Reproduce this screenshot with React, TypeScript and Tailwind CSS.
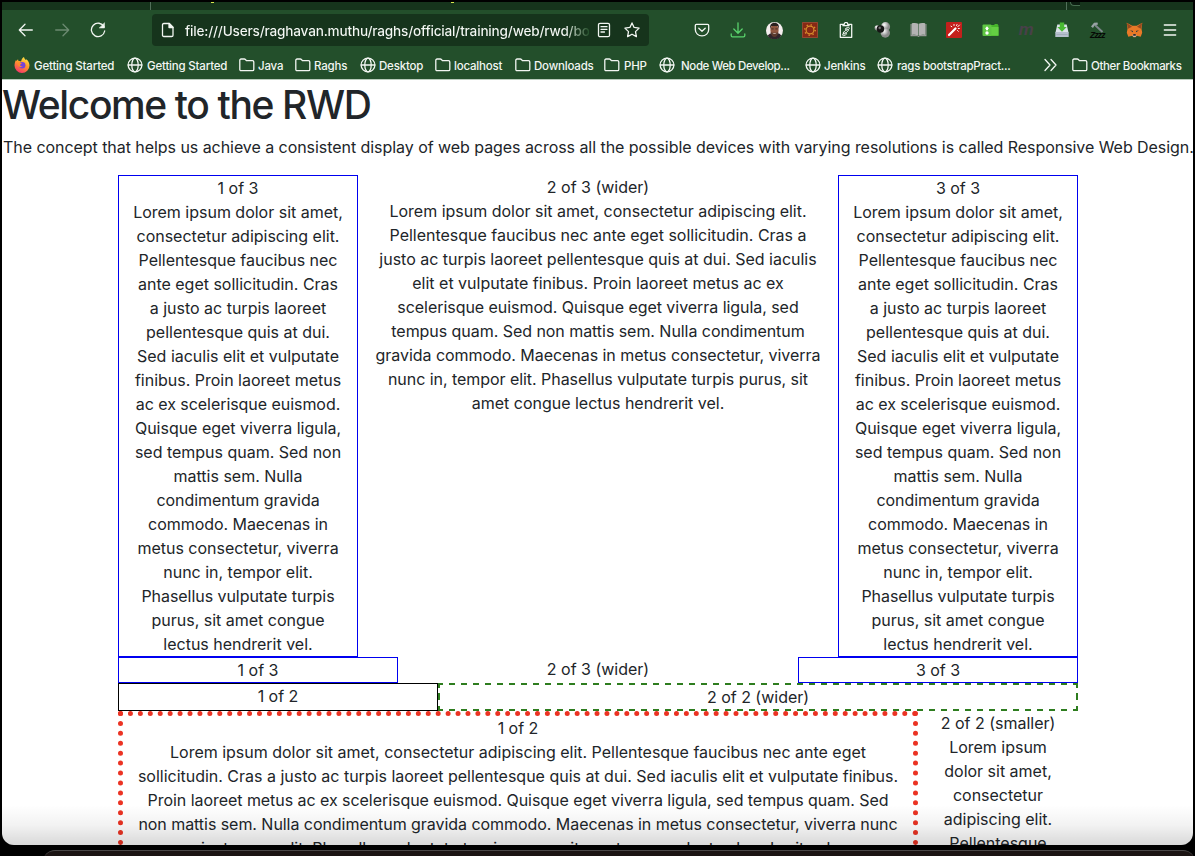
import type { ReactNode } from "react";
import clsx from "clsx";

const narrow = [
  "Lorem ipsum dolor sit amet,", "consectetur adipiscing elit.", "Pellentesque faucibus nec",
  "ante eget sollicitudin. Cras", "a justo ac turpis laoreet", "pellentesque quis at dui.",
  "Sed iaculis elit et vulputate", "finibus. Proin laoreet metus", "ac ex scelerisque euismod.",
  "Quisque eget viverra ligula,", "sed tempus quam. Sed non", "mattis sem. Nulla",
  "condimentum gravida", "commodo. Maecenas in", "metus consectetur, viverra",
  "nunc in, tempor elit.", "Phasellus vulputate turpis", "purus, sit amet congue", "lectus hendrerit vel.",
];
const medium = [
  "Lorem ipsum dolor sit amet, consectetur adipiscing elit.",
  "Pellentesque faucibus nec ante eget sollicitudin. Cras a",
  "justo ac turpis laoreet pellentesque quis at dui. Sed iaculis",
  "elit et vulputate finibus. Proin laoreet metus ac ex",
  "scelerisque euismod. Quisque eget viverra ligula, sed",
  "tempus quam. Sed non mattis sem. Nulla condimentum",
  "gravida commodo. Maecenas in metus consectetur, viverra",
  "nunc in, tempor elit. Phasellus vulputate turpis purus, sit",
  "amet congue lectus hendrerit vel.",
];
const wide = [
  "Lorem ipsum dolor sit amet, consectetur adipiscing elit. Pellentesque faucibus nec ante eget",
  "sollicitudin. Cras a justo ac turpis laoreet pellentesque quis at dui. Sed iaculis elit et vulputate finibus.",
  "Proin laoreet metus ac ex scelerisque euismod. Quisque eget viverra ligula, sed tempus quam. Sed",
  "non mattis sem. Nulla condimentum gravida commodo. Maecenas in metus consectetur, viverra nunc",
  "in, tempor elit. Phasellus vulputate turpis purus, sit amet congue lectus hendrerit vel.",
];
const slim = ["Lorem ipsum", "dolor sit amet,", "consectetur", "adipiscing elit.", "Pellentesque"];

function Lines({ title, lines = [] }: { title: string; lines?: string[] }) {
  return (
    <>
      {[title, ...lines].map((line) => (
        <div
          key={line}
          className={clsx(
            "flex h-6 justify-center whitespace-nowrap",
            /commodo|condimentum|scelerisque|Phasellus/.test(line) ? "tracking-[-0.05px]" : "tracking-[-0.01px]",
          )}
        >
          {line}
        </div>
      ))}
    </>
  );
}

const stroke = { fill: "none", stroke: "currentColor", strokeWidth: 1.3, strokeLinecap: "round", strokeLinejoin: "round" } as const;

function Icon({ children, size = 16 }: { children: ReactNode; size?: number }) {
  return <svg width={size} height={size} viewBox="0 0 16 16" className="shrink-0" {...stroke}>{children}</svg>;
}

const Globe = () => (
  <Icon>
    <circle cx="8" cy="8" r="6.9" />
    <ellipse cx="8" cy="8" rx="3.2" ry="6.9" />
    <path d="M1.2 8h13.6" />
  </Icon>
);
const Folder = () => (
  <Icon>
    <path d="M.8 12.4V3.3c0-.8.5-1.3 1.3-1.3h3.2c.5 0 .8.2 1.1.5l1 1.2h6.1c.8 0 1.3.5 1.3 1.3v7.4c0 .8-.5 1.3-1.3 1.3H2.1c-.8 0-1.3-.5-1.3-1.3z" />
  </Icon>
);
const Firefox = () => (
  <svg width="16" height="16" viewBox="0 0 16 16" className="shrink-0">
    <defs>
      <linearGradient id="flame" x1=".8" y1="0" x2=".3" y2="1">
        <stop offset="0" stopColor="#fff14a" /><stop offset=".45" stopColor="#ff9a2a" /><stop offset="1" stopColor="#f5316d" />
      </linearGradient>
    </defs>
    <path d="M10 0c.2 1.5 1 2.2 2 3.100l.5-.8C14.200 3.900 15.500 6 15.500 8.500A7.500 7.500 0 0 1 .5 8.500c0-2.200.8-4.300 1.500-5.500l.5 1.100L4 2.200l.5 1.800c1.400-.3 2 .2 2.600.4C7.500 2.400 8.300.9 10 0z" fill="url(#flame)" />
    <circle cx="8.200" cy="8.200" r="3.200" fill="#7543d9" />
    <path d="M3.500 6.200c2-.8 3.100-.3 4.600.4-1 .3-1.900.8-1.900 1.600 0 1.100 1.600 1.300 2.400.8-.7 2-4.600 1.600-5.100-2.800z" fill="#ff8a2a" />
  </svg>
);

const bookmarks = [
  { label: "Getting Started", icon: <Firefox />, box: "w-[113px] gap-1" },
  { label: "Getting Started", icon: <Globe />, box: "w-28 gap-1" },
  { label: "Java", icon: <Folder />, box: "w-14 gap-[3px]" },
  { label: "Raghs", icon: <Folder />, box: "w-[65px] gap-[3px]" },
  { label: "Desktop", icon: <Globe />, box: "w-[75px] gap-[3px]" },
  { label: "localhost", icon: <Folder />, box: "w-20 gap-[3px]" },
  { label: "Downloads", icon: <Folder />, box: "w-[89px] gap-[3px]" },
  { label: "PHP", icon: <Folder />, box: "w-[55px] gap-1" },
  { label: "Node Web Develop...", icon: <Globe />, box: "w-[146px] gap-[6px] tracking-[-0.38px]" },
  { label: "Jenkins", icon: <Globe />, box: "w-[72px] gap-[3px]" },
  { label: "rags bootstrapPract...", icon: <Globe />, box: "w-[166px] gap-1 tracking-[-0.28px]" },
];

const extensions = [
  <Icon key="pocket"><path d="M2.300 2.400h11.400c.6 0 1 .4 1 1v4.200c0 3.700-3 6.300-6.700 6.300S1.300 11.300 1.300 7.600V3.400c0-.6.4-1 1-1zM4.800 6.300 8 9.300l3.200-3" /></Icon>,
  <span key="down" className="text-[#59d36c]"><Icon><path d="M8 .8v10M3.800 7 8 11.200 12.200 7M1.200 12v1.500c0 .9.500 1.300 1.300 1.300h11c.8 0 1.300-.4 1.300-1.300V12" /></Icon></span>,
  <svg key="face" width="17" height="17" viewBox="0 0 16 16">
    <circle cx="8" cy="8" r="8" fill="#f5eeee" />
    <path d="M1.500 13c1-1.700 3-2.500 4.500-2.700h4c2 .2 3.600 1 4.500 2.700A8 8 0 0 1 1.500 13z" fill="#30252c" />
    <ellipse cx="8" cy="7.500" rx="3.900" ry="5.500" fill="#8f5740" />
    <path d="M3.900 6.500C3.400 2.800 5 .8 8 .8s4.700 2 4.100 5.700L11.200 3.800H4.900z" fill="#2a211f" />
    <path d="M4.300 9.500c.3 2.800 1.700 4.700 3.700 4.700s3.300-1.900 3.600-4.700l-1.500.7H5.900z" fill="#5a3a2e" />
    <path d="M6.200 10.300h3.600c-.5 1-3.100 1-3.600 0z" fill="#d9c6bf" /><path d="M5 6.500h2.200M8.800 6.500H11" stroke="#3b2520" strokeWidth=".8" />
  </svg>,
  <svg key="gear" width="16" height="16" viewBox="0 0 16 16">
    <path d="M0 0h16v16H0z" fill="#872915" /><path d="M.5.500h15v15H.5z" fill="none" stroke="#914932" />
    <circle cx="8" cy="8" r="3.900" fill="none" stroke="#d88e2b" strokeWidth="1.200" />
    <circle cx="8" cy="8" r="5.200" fill="none" stroke="#d88e2b" strokeWidth="1.500" strokeDasharray="1.300 2.784" />
  </svg>,
  <Icon key="clip"><path d="M5 2.300H2.300v13h11.400v-13H11M5 3.700V2.300h1.300C6.300-.2 9.700-.2 9.700 2.300H11v1.400z" /><g strokeWidth=".8"><rect x="7.300" y="5.800" width="4.200" height="2" rx="1" transform="rotate(-25 9.400 6.800)" /><rect x="4.500" y="8.500" width="6.500" height="2" rx="1" transform="rotate(-40 8 9.500)" /><rect x="4.500" y="11.300" width="4.200" height="2" rx="1" transform="rotate(-25 6.500 12.300)" /></g></Icon>,
  <svg key="balls" width="17" height="16" viewBox="0 0 17 16">
    <defs>
      <radialGradient id="white" cx=".35" cy=".3"><stop stopColor="#fff" /><stop offset="1" stopColor="#8c8c8c" /></radialGradient>
      <radialGradient id="black" cx=".4" cy=".35"><stop stopColor="#999" /><stop offset=".5" stopColor="#161616" /></radialGradient>
    </defs>
    <circle cx="11.500" cy="4.700" r="4.600" fill="url(#white)" /><circle cx="11.300" cy="11" r="4.700" fill="url(#white)" />
    <circle cx="3.200" cy="5.800" r="2.600" fill="url(#white)" /><circle cx="6.500" cy="7" r="3.700" fill="url(#black)" />
  </svg>,
  <svg key="book" width="17" height="16" viewBox="0 0 17 16">
    <path d="M.5 2h1.200v11h5.600l1.200 1 1.200-1h5.600V2h1.200v12.300H9.700l-1.200.7-1.200-.7H.5z" fill="#999" />
    <path d="M1.800 1.300c2.500-.6 5-.4 6.500.4V13.500c-2-1-4.500-1-6.500-.5zM8.800 1.700c1.400-.8 3.900-1 6.400-.4V13c-2-.5-4.400-.5-6.400.5z" fill="#b3b3b3" />
  </svg>,
  <svg key="wand" width="16" height="16" viewBox="0 0 16 16">
    <rect width="16" height="16" rx="1" fill="#c3201c" />
    <path d="m3 13 6.500-6.500" stroke="#fff" strokeWidth="2.200" strokeLinecap="round" />
    <path d="M8 2.500v1M5 4.200l.8.500M11 2.500l-.5 1M13.500 3l-1.700 1.700M12.300 6.500h1M11.500 8.500l.8.800" stroke="#fff" strokeLinecap="round" />
  </svg>,
  <svg key="green" width="17" height="16" viewBox="0 0 17 16">
    <path d="M8 3h4l1-1h2.500l1 1.500V14H6V5z" fill="#47b52b" /><path d="M8 5h8.500v8.500H8z" fill="#64d043" />
    <rect x=".5" y="2.500" width="9" height="11.500" rx="1" fill="#5ec743" />
    <path d="M5 4.200 7.200 6.800H6v1.400H4V6.800H2.800z" fill="#fff" /><circle cx="5" cy="11" r="1.700" fill="#fff" />
  </svg>,
  <span key="m" className="font-['Liberation_Sans'] text-[17px] leading-5 font-bold text-[#484149] italic">m</span>,
  <svg key="install" width="16" height="16" viewBox="0 0 16 16">
    <path d="M3.300 2.500h9.400l1.800 8h-13z" fill="#dce3ea" /><path d="M1.300 10h13.400v5H1.300z" fill="#b6c0ce" /><path d="M2.500 12.500h11v.6h-11z" fill="#8e99a8" />
    <path d="M5.800.5h4.400V5h2.500L8 9.700 3.300 5h2.500z" fill="#4abb35" />
  </svg>,
  <svg key="hammer" width="18" height="16" viewBox="0 0 18 16">
    <path d="M6 3 13.500 10" stroke="#7c878a" strokeWidth="2" /><path d="M2 4.500 5 .8 8.500.5 9 2.500 5.500 3.500 4 6z" fill="#98a2a5" />
    <text x="1" y="15.500" fontSize="8.500" fontWeight="700" fontStyle="italic" fontFamily="Liberation Sans, sans-serif" fill="#050805" textLength="15.500">Zzzz</text>
  </svg>,
  <svg key="fox" width="17" height="16" viewBox="0 0 17 16">
    <path d="m.7.8 5.600 3h4.400l5.600-3-.8 6 .7 4-1.500 4-4-1-1.100 1.500H7.400L6.300 13.800l-4 1-1.500-4 .7-4z" fill="#e87927" />
    <path d="m.7.8 5.300 4-4 2zM16.300.8 11 4.800l4 2z" fill="#944b20" />
    <path d="M4 8.200 7.100 9 6.800 10.200zM13 8.200 9.900 9l.3 1.200z" fill="#27383d" /><path d="m6.500 13.400.6-1.400h2.800l.6 1.400L9.500 15h-2z" fill="#c6b4a6" /><path d="M7.200 12h2.600v1.700H7.200z" fill="#332b2a" />
  </svg>,
  <Icon key="menu"><path d="M2.300 3h11.400M2.300 8h11.400M2.300 13h11.400" /></Icon>,
];

function Browser() {
  return (
    <header className="h-[78px] shrink-0 border-b border-[#b9cbbc] bg-[#234f2b] text-[#f2f6f2]">
      <div className="flex h-2 bg-[#16341c]">
        <div className="w-[149px] border-r border-[#52705a]" />
        <div className="w-[60px]" />
        <div className="h-px w-[3px] bg-[#d5e84b]" />
        <div className="w-[237px]" />
        <div className="h-px w-[3px] bg-[#d5e84b]" />
        <div className="w-[613px] border-r border-[#52705a]" />
        <div className="ml-[3px] h-1 w-[10px] rounded-bl border-b border-l border-[#466b4f] bg-[#0b1c10]" />
      </div>
      <div className="flex h-10 items-center">
        <div className="flex w-[150px] pl-[6px]">
          <span className="flex w-9 justify-center"><Icon><path d="M14.300 8H1.500M7 2.300 1.300 8 7 13.700" /></Icon></span>
          <span className="flex w-9 justify-center opacity-35"><Icon><path d="M1.700 8h12.800M9 2.300 14.700 8 9 13.700" /></Icon></span>
          <span className="flex w-9 justify-center"><Icon><path d="M14 4.700A6.700 6.700 0 1 0 14.700 9" /><path d="M14.500 1v5h-5z" fill="currentColor" strokeWidth=".5" /></Icon></span>
        </div>
        <div className="flex h-8 w-[497px] items-center rounded bg-[#16341c] pl-2">
          <Icon><path d="M3.800 1.500h5.500l3.700 3.700v8c0 .8-.5 1.300-1.300 1.300H3.800c-.8 0-1.300-.5-1.300-1.300V2.800c0-.8.5-1.300 1.300-1.300z" /><path d="M9 1.500v4h4z" fill="currentColor" /></Icon>
          <div className="ml-[9px] w-[404px] bg-linear-to-r from-[#f5f8f5] from-94% to-[#234f2b] bg-clip-text pt-px text-[13.6px] leading-5 font-medium tracking-[-0.19px] whitespace-nowrap text-transparent">file:///Users/raghavan.muthu/raghs/official/training/web/rwd/bo</div>
          <span className="ml-[7px]"><Icon><rect x="2.500" y="1.300" width="11" height="13.400" rx="1.500" /><path d="M5 4.700h6M5 7.300h6M5 10h3.500" /></Icon></span>
          <span className="ml-3"><Icon><path d="m8 .9 2.100 4.500 5 .7-3.600 3.500.9 5L8 12.200l-4.400 2.400.9-5L.9 6.100l5-.7z" /></Icon></span>
        </div>
        <div className="ml-[35px] flex items-center">
          {extensions.map((icon, i) => <span key={i} className="flex h-5 w-9 items-center justify-center">{icon}</span>)}
        </div>
      </div>
      <div className="flex h-[29px] items-center pl-3 text-[11.5px] leading-4 font-medium tracking-[-0.19px] whitespace-nowrap">
        {bookmarks.map(({ label, icon, box }, i) => (
          <div key={i} className={clsx("flex shrink-0 items-center", box)}>{icon}<span className="pt-[2px]">{label}</span></div>
        ))}
        <div className="w-[29px] shrink-0"><Icon><path d="m2 2.500 5 5.500-5 5.500M8 2.500 13 8l-5 5.500" /></Icon></div>
        <div className="flex shrink-0 items-center gap-[3px] tracking-[-0.35px]"><Folder /><span className="pt-[2px]">Other Bookmarks</span></div>
      </div>
    </header>
  );
}

export default function App() {
  return (
    <div className="h-[856px] w-[1195px] overflow-hidden bg-black pt-[2px] pl-[2px] font-[Inter,sans-serif]">
      <div className="relative flex h-[843px] w-[1191px] flex-col overflow-hidden rounded-b-xl bg-white">
        <Browser />
        <main className="-mt-px h-[766px] pl-px text-base leading-6 text-[#212529]">
          <h1 className="-ml-px h-12 text-[39px] leading-[51px] font-medium tracking-[-1.38px]">Welcome to the RWD</h1>
          <p className="mt-2 mb-4 h-6 tracking-[-0.053px] whitespace-nowrap">The concept that helps us achieve a consistent display of web pages across all the possible devices with varying resolutions is called Responsive Web Design.</p>
          <div className="ml-[115px] w-[960px]">
            <section className="flex">
              <div className="w-60 border border-[#0000f0]"><Lines title="1 of 3" lines={narrow} /></div>
              <div className="w-[480px]"><Lines title="2 of 3 (wider)" lines={medium} /></div>
              <div className="w-60 border border-[#0000f0]"><Lines title="3 of 3" lines={narrow} /></div>
            </section>
            <section className="flex">
              <div className="w-70 border border-[#0000f0]"><Lines title="1 of 3" /></div>
              <div className="w-100"><Lines title="2 of 3 (wider)" /></div>
              <div className="w-70 border border-[#0000f0]"><Lines title="3 of 3" /></div>
            </section>
            <section className="flex">
              <div className="w-80 border border-black"><Lines title="1 of 2" /></div>
              <div className="w-160 bg-no-repeat p-[2px] [background-image:repeating-linear-gradient(90deg,#2e7d1f_0_5px,transparent_5px_11px,#2e7d1f_11px_12px),repeating-linear-gradient(90deg,#2e7d1f_0_5px,transparent_5px_11px,#2e7d1f_11px_12px),linear-gradient(#2e7d1f_0_5px,transparent_5px_10px,#2e7d1f_10px_17px,transparent_17px_23px,#2e7d1f_23px),linear-gradient(#2e7d1f_0_5px,transparent_5px_10px,#2e7d1f_10px_17px,transparent_17px_23px,#2e7d1f_23px)] [background-position:0_0,0_100%,0_0,100%_0] [background-size:100%_2px,100%_2px,2px_100%,2px_100%]"><Lines title="2 of 2 (wider)" /></div>
            </section>
            <section className="flex">
              <div className="w-200 border-5 border-dotted border-[#eb3323]"><Lines title="1 of 2" lines={wide} /></div>
              <div className="w-40"><Lines title="2 of 2 (smaller)" lines={slim} /></div>
            </section>
          </div>
        </main>
        <div className="pointer-events-none absolute inset-x-0 bottom-0 h-10 bg-linear-to-t from-black/15 via-black/5 to-transparent" />
      </div>
      <div className="mt-[5px] ml-[41px] h-5 rounded-t-xl border-t border-[#4a4747] bg-[#1b1413]" />
    </div>
  );
}
